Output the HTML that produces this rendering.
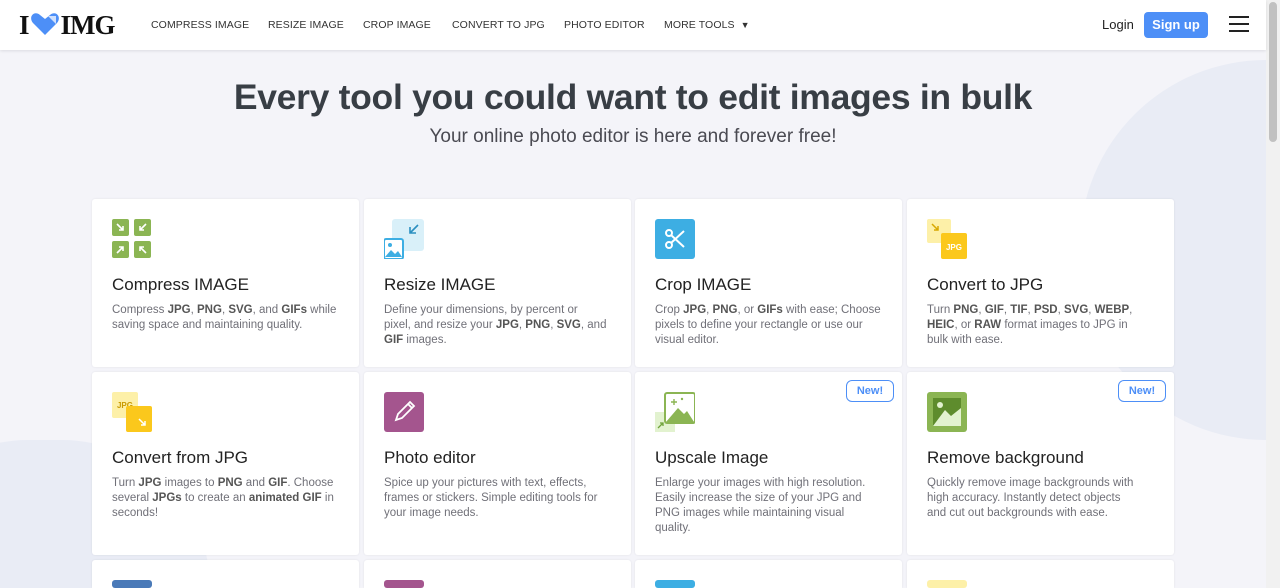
<!DOCTYPE html><html><head><style>
*{margin:0;padding:0;box-sizing:border-box}
html,body{width:1280px;height:588px;overflow:hidden}
body{background:#f4f4f9;font-family:"Liberation Sans",sans-serif;position:relative}
.hdr{position:absolute;left:0;top:0;width:1266px;height:50px;background:#fff;box-shadow:0 1px 3px rgba(0,0,0,.1);z-index:2}
.logo{position:absolute;left:19px;top:10px;font:bold 27px "Liberation Serif",serif;color:#111;letter-spacing:-1px}
.nav{position:absolute;top:19px;font-size:10.5px;color:#333;letter-spacing:.1px}
.sb{position:absolute;right:0;top:0;width:14px;height:588px;background:#f1f1f1}
.sb i{position:absolute;left:3px;top:2px;width:8px;height:140px;background:#c1c1c1;border-radius:4px}
.blob{position:absolute;border-radius:50%;background:#e9ecf5}
h1{position:absolute;left:0;width:1266px;top:77px;text-align:center;font-size:35.5px;color:#383e45;font-weight:bold;letter-spacing:-.3px}
h2{position:absolute;left:0;width:1266px;top:126px;text-align:center;font-size:19px;color:#4a4a52;font-weight:normal}
.c{position:absolute;width:267px;background:#fff;border-radius:3px;box-shadow:0 0 2px rgba(0,0,0,.08);overflow:hidden}
.c .ic{position:absolute;left:20px;top:20px;width:40px;height:40px}
.c h3{position:absolute;left:20px;top:76px;font-size:17px;font-weight:normal;color:#222}
.c p{position:absolute;left:20px;top:104px;width:245px;font-size:11.5px;line-height:15px;color:#707078;white-space:nowrap}
.c p b{color:#555}
.new{position:absolute;right:8px;top:8px;width:48px;height:22px;border:1px solid #4d8ff7;border-radius:6px;color:#4d8ff7;font-size:11px;font-weight:bold;text-align:center;line-height:20px}
</style></head><body>
<div class="blob" style="left:-120px;top:440px;width:330px;height:148px;border-radius:165px 165px 0 0"></div>
<div class="blob" style="left:1080px;top:60px;width:186px;height:380px;border-radius:190px 0 0 190px"></div>
<div class="hdr">
<div class="logo">I<svg width="30" height="24" viewBox="0 0 30 24" style="vertical-align:-2px;margin:0 1px"><path d="M15 23 L3 11 C-2 5 4 -2 10 3 L15 7 L20 3 C26 -2 32 5 27 11Z" fill="#4d8ff7"/><path d="M18 4 L26 4 L26 12Z" fill="#cfe0fd"/></svg>IMG</div>
<span class="nav" style="left:151px">COMPRESS IMAGE</span>
<span class="nav" style="left:268px">RESIZE IMAGE</span>
<span class="nav" style="left:363px">CROP IMAGE</span>
<span class="nav" style="left:452px">CONVERT TO JPG</span>
<span class="nav" style="left:564px">PHOTO EDITOR</span>
<span class="nav" style="left:664px">MORE TOOLS &nbsp;<span style="font-size:9px">▼</span></span>
<span style="position:absolute;left:1102px;top:17px;font-size:13px;color:#222">Login</span>
<span style="position:absolute;left:1144px;top:12px;width:64px;height:26px;background:#4d8ff7;color:#fff;border-radius:4px;font-size:13px;font-weight:bold;text-align:center;line-height:26px">Sign up</span>
<div style="position:absolute;left:1229px;top:16px;width:20px;height:2px;background:#222;box-shadow:0 7px 0 #222,0 14px 0 #222"></div>
</div>
<div class="sb"><i></i></div>
<h1>Every tool you could want to edit images in bulk</h1>
<h2>Your online photo editor is here and forever free!</h2>

<div class="c" style="left:92px;top:199px;height:168px"><svg class="ic" viewBox="0 0 40 40"><g fill="#8bb553"><rect x="0" y="0" width="17" height="17" rx="2"/><rect x="22" y="0" width="17" height="17" rx="2"/><rect x="0" y="22" width="17" height="17" rx="2"/><rect x="22" y="22" width="17" height="17" rx="2"/></g><g stroke="#fff" stroke-width="1.6" fill="none"><path d="M5 5l6 6M11 7v4H7M34 5l-6 6M28 7v4h4M5 34l6-6M7 28h4v4M34 34l-6-6M28 32v-4h4"/></g></svg><h3>Compress IMAGE</h3><p>Compress <b>JPG</b>, <b>PNG</b>, <b>SVG</b>, and <b>GIFs</b> while<br>saving space and maintaining quality.</p></div>
<div class="c" style="left:364px;top:199px;height:168px"><svg class="ic" viewBox="0 0 40 40"><rect x="8" y="0" width="32" height="32" rx="3" fill="#d9f0f9"/><path d="M34 6L26 14M26 8v6h6" stroke="#2a8fc0" stroke-width="1.6" fill="none"/><rect x="0" y="20" width="19" height="20" rx="2" fill="#fff" stroke="#3daee3" stroke-width="2"/><path d="M1 38l6-7 4 4 3-3 4 6z" fill="#3daee3"/><circle cx="6" cy="26" r="2" fill="#3daee3"/></svg><h3>Resize IMAGE</h3><p>Define your dimensions, by percent or<br>pixel, and resize your <b>JPG</b>, <b>PNG</b>, <b>SVG</b>, and<br><b>GIF</b> images.</p></div>
<div class="c" style="left:635px;top:199px;height:168px"><svg class="ic" viewBox="0 0 40 40"><rect width="40" height="40" rx="3" fill="#3daee3"/><g stroke="#fff" stroke-width="2" fill="none"><circle cx="14" cy="14" r="3"/><circle cx="14" cy="26" r="3"/><path d="M16 16l13 12M16 24l13-12"/></g></svg><h3>Crop IMAGE</h3><p>Crop <b>JPG</b>, <b>PNG</b>, or <b>GIFs</b> with ease; Choose<br>pixels to define your rectangle or use our<br>visual editor.</p></div>
<div class="c" style="left:907px;top:199px;height:168px"><svg class="ic" viewBox="0 0 40 40"><rect width="24" height="24" rx="2" fill="#fdf0a8"/><path d="M5 5l6 6M11 7v4H7" stroke="#d8a800" stroke-width="1.5" fill="none"/><rect x="14" y="14" width="26" height="26" rx="2" fill="#fbc81c"/><text x="27" y="31" font-size="8" fill="#fff" text-anchor="middle" font-family="Liberation Sans" font-weight="bold">JPG</text></svg><h3>Convert to JPG</h3><p>Turn <b>PNG</b>, <b>GIF</b>, <b>TIF</b>, <b>PSD</b>, <b>SVG</b>, <b>WEBP</b>,<br><b>HEIC</b>, or <b>RAW</b> format images to JPG in<br>bulk with ease.</p></div>

<div class="c" style="left:92px;top:372px;height:183px"><svg class="ic" viewBox="0 0 40 40"><rect width="26" height="26" rx="2" fill="#fdf0a8"/><text x="13" y="16" font-size="8" fill="#c99a00" text-anchor="middle" font-family="Liberation Sans" font-weight="bold">JPG</text><rect x="14" y="14" width="26" height="26" rx="2" fill="#fbc81c"/><path d="M27 27l6 6M33 29v4h-4" stroke="#fff" stroke-width="1.5" fill="none"/></svg><h3>Convert from JPG</h3><p>Turn <b>JPG</b> images to <b>PNG</b> and <b>GIF</b>. Choose<br>several <b>JPGs</b> to create an <b>animated GIF</b> in<br>seconds!</p></div>
<div class="c" style="left:364px;top:372px;height:183px"><svg class="ic" viewBox="0 0 40 40"><rect width="40" height="40" rx="3" fill="#a4558e"/><path d="M12 28l2-6 12-12 4 4-12 12z M24 12l4 4" stroke="#fff" stroke-width="1.8" fill="none"/></svg><h3>Photo editor</h3><p>Spice up your pictures with text, effects,<br>frames or stickers. Simple editing tools for<br>your image needs.</p></div>
<div class="c" style="left:635px;top:372px;height:183px"><div class="new">New!</div><svg class="ic" viewBox="0 0 40 40"><rect x="0" y="20" width="20" height="20" fill="#e2f2cf"/><path d="M3 36l5-5M5 31h3v3" stroke="#6fa33a" stroke-width="1.3" fill="none"/><rect x="10" y="1" width="30" height="30" rx="2" fill="#fff" stroke="#8bb553" stroke-width="2"/><path d="M11 30l12-14 6 6 3-3 7 11z" fill="#8bb553"/><path d="M19 7v6M16 10h6" stroke="#8bb553" stroke-width="1.4"/><circle cx="27" cy="7" r="1.2" fill="#8bb553"/></svg><h3>Upscale Image</h3><p>Enlarge your images with high resolution.<br>Easily increase the size of your JPG and<br>PNG images while maintaining visual<br>quality.</p></div>
<div class="c" style="left:907px;top:372px;height:183px"><div class="new">New!</div><svg class="ic" viewBox="0 0 40 40"><rect width="40" height="40" rx="3" fill="#8bb553"/><rect x="6" y="6" width="28" height="28" fill="#5e8c2d"/><path d="M6 34l12-16 6 6 10-8v18z" fill="#e2f2cf"/><circle cx="13" cy="13" r="3" fill="#e2f2cf"/></svg><h3>Remove background</h3><p>Quickly remove image backgrounds with<br>high accuracy. Instantly detect objects<br>and cut out backgrounds with ease.</p></div>

<div class="c" style="left:92px;top:560px;height:28px;border-radius:3px 3px 0 0"><div class="ic" style="background:#4a7ab8;border-radius:3px;height:8px"></div></div>
<div class="c" style="left:364px;top:560px;height:28px;border-radius:3px 3px 0 0"><div class="ic" style="background:#a4558e;border-radius:3px;height:8px"></div></div>
<div class="c" style="left:635px;top:560px;height:28px;border-radius:3px 3px 0 0"><div class="ic" style="background:#3daee3;border-radius:3px;height:8px"></div></div>
<div class="c" style="left:907px;top:560px;height:28px;border-radius:3px 3px 0 0"><div class="ic" style="background:#fdf0a8;border-radius:3px;height:8px"></div></div>
</body></html>
